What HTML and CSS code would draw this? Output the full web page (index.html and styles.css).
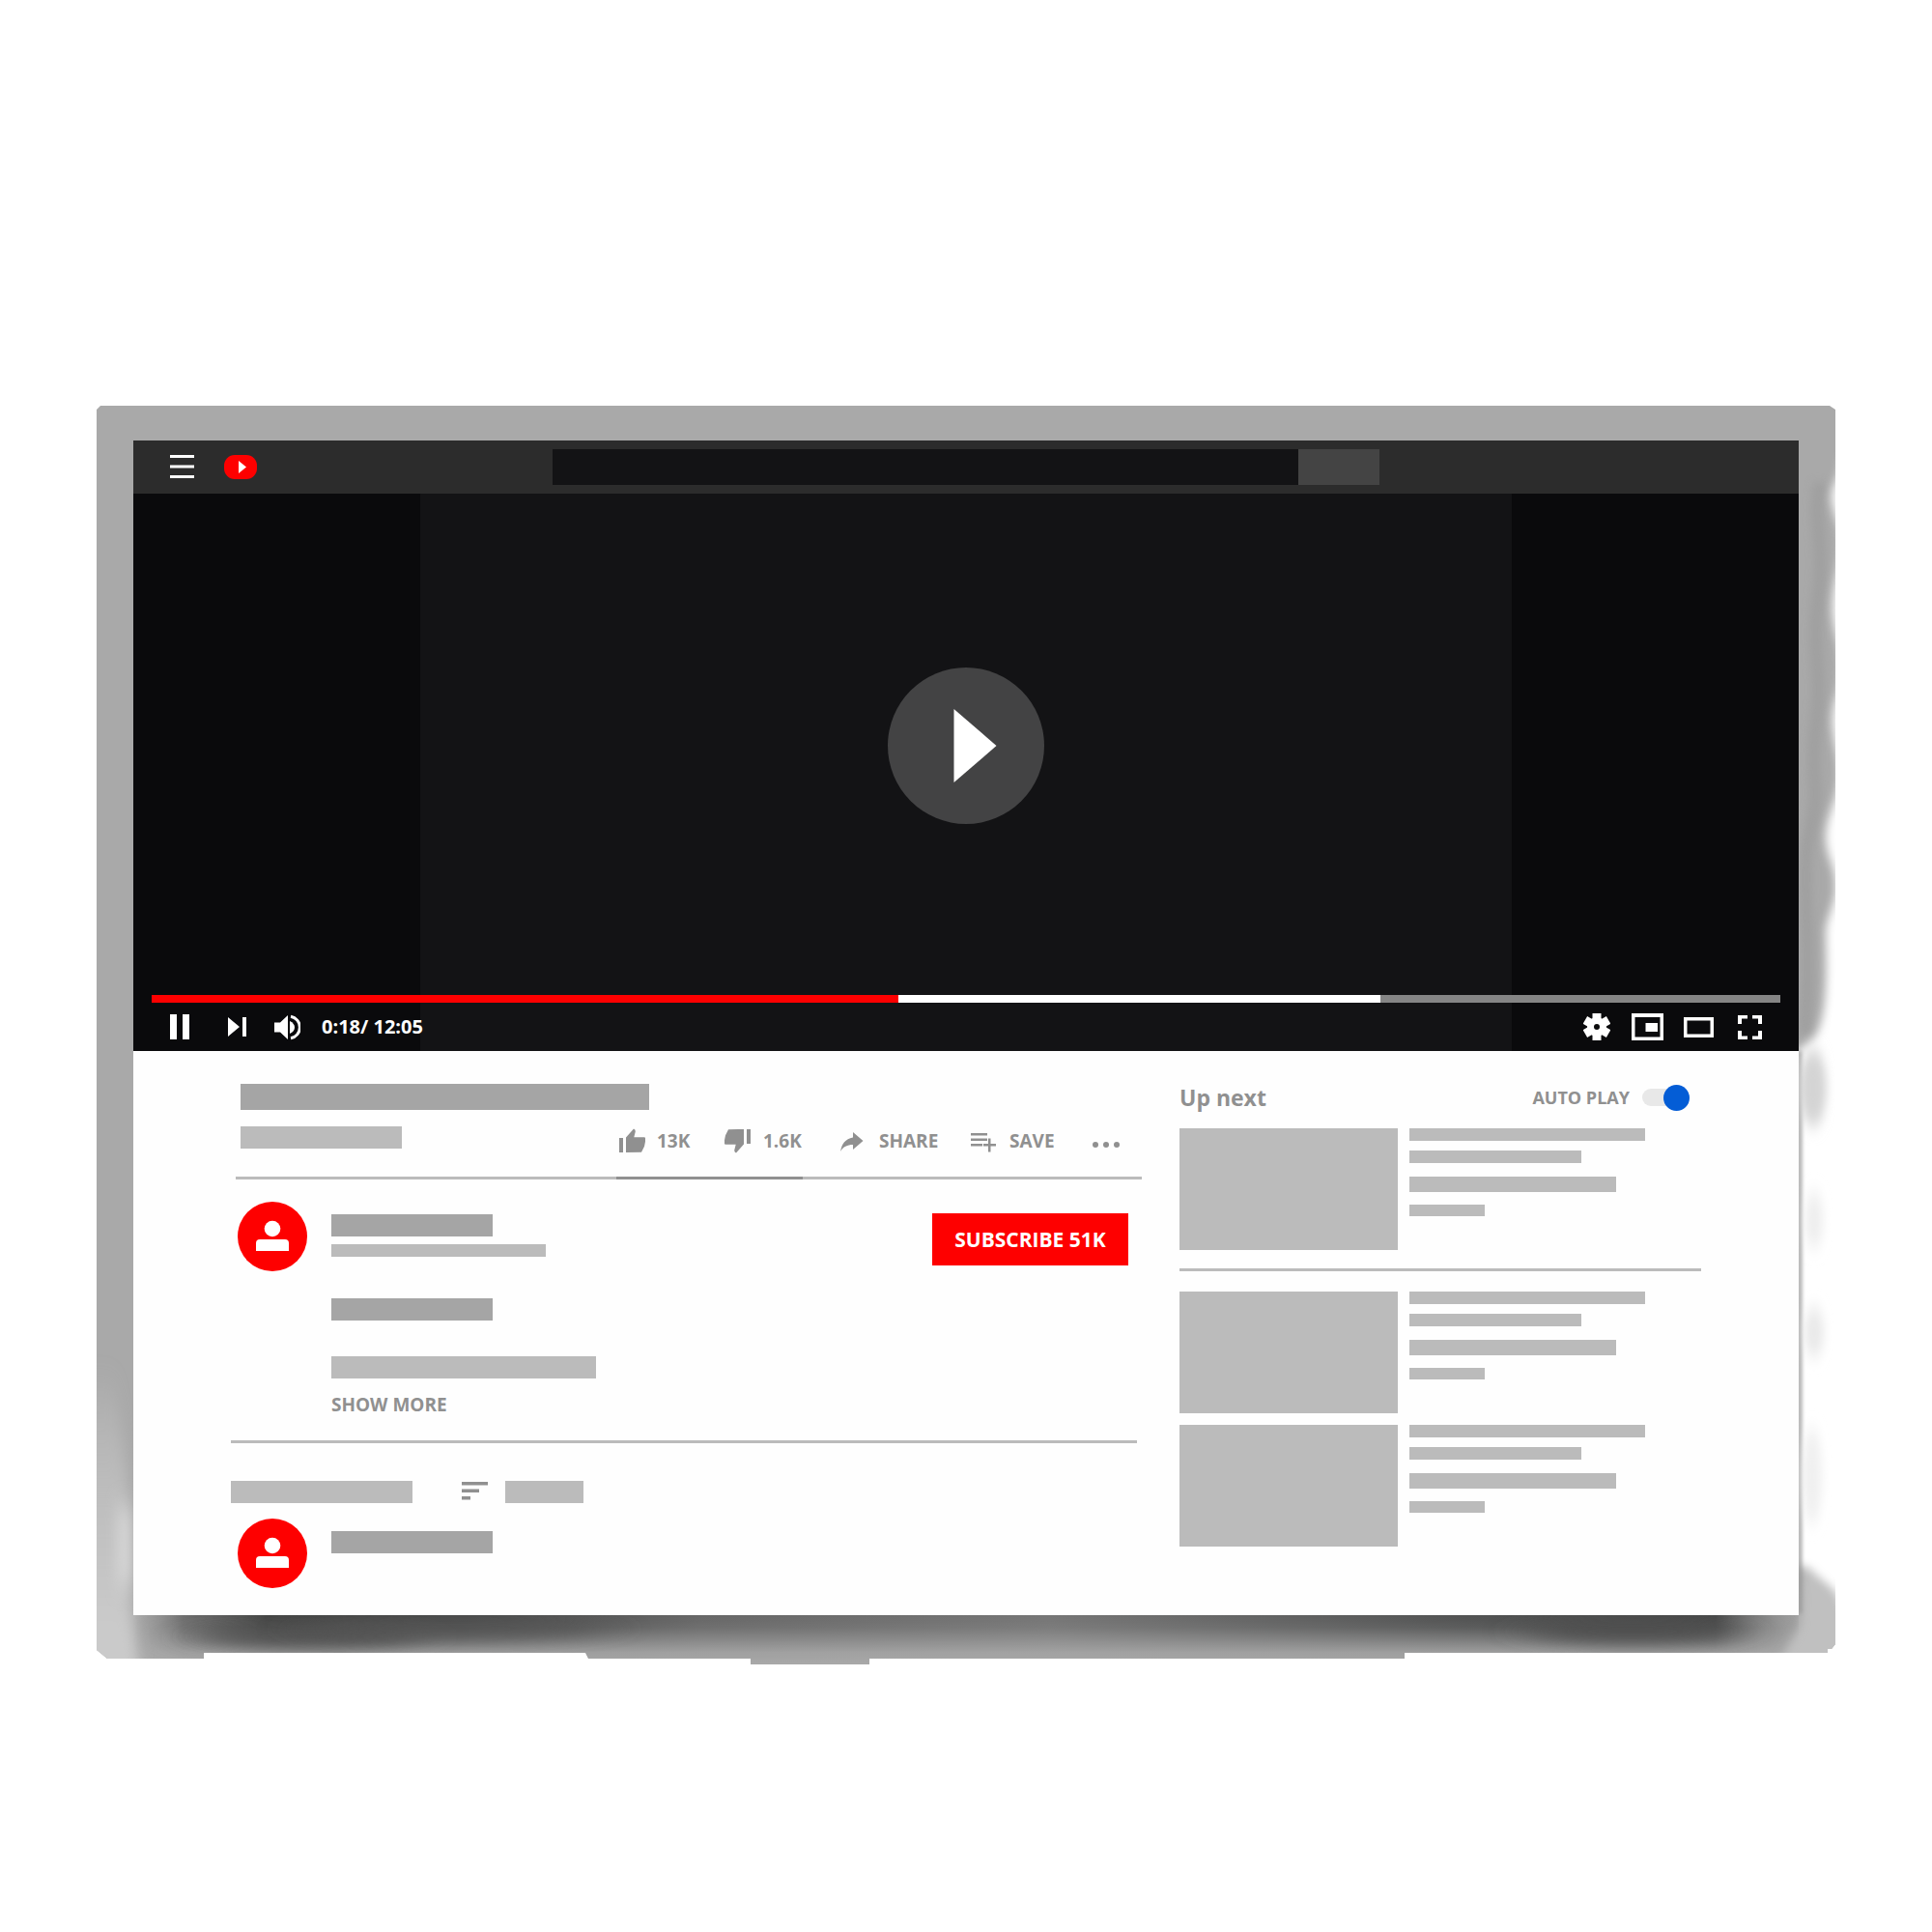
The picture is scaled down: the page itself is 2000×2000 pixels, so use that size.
FILE: index.html
```html
<!DOCTYPE html>
<html lang="en">
<head>
<meta charset="utf-8">
<meta name="viewport" content="width=device-width, initial-scale=1">
<title>Video player</title>
<link rel="stylesheet" href="styles.css">
</head>
<body>
<svg class="symbols" aria-hidden="true">
  <symbol id="avatar" viewBox="0 0 72 72">
    <circle cx="36" cy="36" r="36" fill="#fe0000"/>
    <circle cx="36" cy="28" r="8.3" fill="#fff"/>
    <path d="M19 51v-8q0-4 4-4h26q4 0 4 4v8z" fill="#fff"/>
  </symbol>
  <symbol id="thumb-up" viewBox="0 0 28 28">
    <path d="M1 11h4v15H1zM8 26V10.500L16 1.500q2.500 1 1.500 4L16.300 10.300H27q1.500 0 1 3v1.500l-1 5-3 6z"/>
  </symbol>
</svg>

<div class="device">
  <svg class="bezel" viewBox="0 0 1800 1303" preserveAspectRatio="none" aria-hidden="true">
    <defs>
      <clipPath id="outline"><path d="M0 4 4 0H1794L1800 4V1282L1796 1287 1792 1287V1291H1354V1297H800V1303H677V1297H509L506 1291H111V1297H11L0 1288z"/></clipPath>
      <linearGradient id="shade-x">
        <stop offset="0" stop-color="#777" stop-opacity="0"/>
        <stop offset=".03" stop-color="#555" stop-opacity=".7"/>
        <stop offset=".08" stop-color="#434443"/>
        <stop offset=".2" stop-color="#454646"/>
        <stop offset=".34" stop-color="#666"/>
        <stop offset=".55" stop-color="#757575"/>
        <stop offset=".8" stop-color="#505151"/>
        <stop offset=".95" stop-color="#464747"/>
        <stop offset="1" stop-color="#888" stop-opacity=".3"/>
      </linearGradient>
      <linearGradient id="fade-y" x2="0" y2="1">
        <stop offset="0" stop-color="#fff"/>
        <stop offset=".25" stop-color="#ddd"/>
        <stop offset=".75" stop-color="#222"/>
        <stop offset="1" stop-color="#000"/>
      </linearGradient>
      <linearGradient id="pale" gradientUnits="userSpaceOnUse" x1="0" y1="1000" x2="0" y2="1260">
        <stop offset="0" stop-color="#c9c9c9" stop-opacity="0"/>
        <stop offset=".5" stop-color="#c0c0c0" stop-opacity=".9"/>
        <stop offset="1" stop-color="#cacaca"/>
      </linearGradient>
      <mask id="fade"><rect x="38" y="1252" width="1724" height="51" fill="url(#fade-y)"/></mask>
      <filter id="soft-edge" filterUnits="userSpaceOnUse" x="1700" y="0" width="160" height="1340"><feGaussianBlur stdDeviation="5"/></filter>
      <filter id="soft-spot" filterUnits="userSpaceOnUse" x="1700" y="600" width="160" height="700"><feGaussianBlur stdDeviation="5 9"/></filter>
      <filter id="soft-left" filterUnits="userSpaceOnUse" x="-60" y="950" width="220" height="400"><feGaussianBlur stdDeviation="7 12"/></filter>
      <filter id="soft-l" x="-80%" y="-100%" width="260%" height="300%"><feGaussianBlur stdDeviation="24 8"/></filter>
      <filter id="soft-line" filterUnits="userSpaceOnUse" x="1740" y="640" width="60" height="640"><feGaussianBlur stdDeviation="2"/></filter>
    </defs>
    <g clip-path="url(#outline)">
      <rect width="1800" height="1303" fill="#a9a9a9"/>
      <path d="M-30 1000H18L32 1110 36 1250 48 1330H-30z" fill="url(#pale)" filter="url(#soft-left)"/>
      <path d="M29 1140V1220" stroke="#dcdcdc" stroke-width="12" filter="url(#soft-left)"/>
      <rect x="38" y="1252" width="1724" height="51" fill="url(#shade-x)" mask="url(#fade)"/>
      <ellipse cx="220" cy="1274" rx="120" ry="13" fill="#4b4c4b" filter="url(#soft-l)" opacity=".75"/>
      <ellipse cx="370" cy="1266" rx="160" ry="12" fill="#555" filter="url(#soft-l)" opacity=".7"/>
      <ellipse cx="1590" cy="1269" rx="110" ry="13" fill="#4b4c4b" filter="url(#soft-l)" opacity=".8"/>
      <path d="M1766 1200H1820V1320H1730L1764 1262z" fill="#c0c0c0" filter="url(#soft-edge)"/>
      <path d="M1784 80C1776 120 1789 140 1782 200S1787 270 1780 330 1786 390 1774 440 1778 550 1768 650" fill="none" stroke="#989898" stroke-width="12" opacity=".6" filter="url(#soft-edge)"/>
      <path d="M1840 50 1806 55C1806 75 1796 80 1796 95S1806 122 1806 142 1797 185 1797 209 1806 245 1806 270 1797 305 1797 326 1804 360 1804 382 1790 425 1790 446 1800 475 1800 497 1790 528 1790 548 1794 640 1776 656L1756 672V1200L1774 1204C1786 1218 1806 1225 1806 1244H1840z" fill="#fff" filter="url(#soft-edge)"/>
      <path d="M1763 668V1250" stroke="#999" stroke-width="4" filter="url(#soft-line)"/>
      <g filter="url(#soft-spot)">
        <ellipse cx="1777" cy="706" rx="14" ry="40" fill="#d4d4d4"/>
        <ellipse cx="1778" cy="843" rx="9" ry="30" fill="#eee"/>
        <ellipse cx="1778" cy="959" rx="10" ry="26" fill="#e9e9e9"/>
        <ellipse cx="1776" cy="1108" rx="10" ry="50" fill="#f0f0f0"/>
      </g>
    </g>
  </svg>

  <div class="screen">
    <header class="topbar">
      <div class="brand">
        <button class="icon-button" type="button" aria-label="Menu">
          <svg width="25" height="25" viewBox="0 0 25 25"><path d="M0 0h25v3H0zM0 10.500h25v3H0zM0 21h25v3H0z"/></svg>
        </button>
        <a class="logo" href="#" aria-label="Home">
          <svg width="34" height="25" viewBox="0 0 34 25"><rect width="34" height="25" rx="11" fill="#fe0000"/><path d="M15 6v13l8-6.500z"/></svg>
        </a>
      </div>
      <form class="search">
        <input class="search-input" type="text" aria-label="Search">
        <button class="search-button" type="button" aria-label="Search"></button>
      </form>
    </header>

    <section class="player" aria-label="Player">
      <div class="stage">
        <button class="play" type="button" aria-label="Play">
          <svg width="162" height="162" viewBox="0 0 162 162"><circle cx="81" cy="81" r="81" fill="#434344"/><path d="M68.500 43v76L112.500 81z"/></svg>
        </button>
      </div>
      <input class="seek" type="range" min="0" max="725" value="18" aria-label="Seek" style="--played: 45.850%; --loaded: 75.450%">
      <div class="controls">
        <button class="icon-button pause" type="button" aria-label="Pause">
          <svg width="20" height="26" viewBox="0 0 20 26"><path d="M0 0h7v26H0zM13 0h7v26h-7z"/></svg>
        </button>
        <button class="icon-button next" type="button" aria-label="Next">
          <svg width="20" height="20" viewBox="0 0 20 20"><path d="M0 0v20l12-10zM15 0h4v20h-4z"/></svg>
        </button>
        <button class="icon-button volume" type="button" aria-label="Volume">
          <svg width="27" height="27" viewBox="0 0 27 27"><path d="M0 8.500h6L14 1v25l-8-7.500H0z"/><path d="M16 7q5 2.500 5 6.500t-5 6.500z"/><path d="M17 2.200a11.500 11.500 0 0 1 0 22.600" fill="none" stroke="#fff" stroke-width="3"/></svg>
        </button>
        <span class="time">0:18/ 12:05</span>
        <div class="tools">
          <button class="icon-button" type="button" aria-label="Settings">
            <svg width="28" height="28" viewBox="-14 -14 28 28">
              <circle r="10"/>
              <path d="M-4.500-14h9v28h-9z" id="tooth"/><use href="#tooth" transform="rotate(60)"/><use href="#tooth" transform="rotate(120)"/>
              <circle r="3" fill="#0b0b0c"/>
            </svg>
          </button>
          <button class="icon-button" type="button" aria-label="Miniplayer">
            <svg width="33" height="28" viewBox="0 0 33 28"><path fill-rule="evenodd" d="M0 0h33v28H0zM3.500 4v20.500h26V4z"/><path d="M14.500 10H27v9H14.500z"/></svg>
          </button>
          <button class="icon-button" type="button" aria-label="Theater mode">
            <svg width="31" height="21" viewBox="0 0 31 21"><path fill-rule="evenodd" d="M0 0h31v21H0zM3.500 3.500v14h24v-14z"/></svg>
          </button>
          <button class="icon-button" type="button" aria-label="Full screen">
            <svg width="25" height="25" viewBox="0 0 25 25"><path d="M0 9V0h10v3.500H4V9zM15 0h10v9h-4V3.500h-6zM0 16h4v5.500h6V25H0zM21 16h4v9H15v-3.500h6z"/></svg>
          </button>
        </div>
      </div>
    </section>

    <main class="content">
      <div class="primary">
        <section class="summary">
          <div class="bar bar-title"></div>
          <div class="meta">
            <div class="bar bar-name light"></div>
            <div class="actions">
              <button class="action like" type="button"><svg width="28" height="28"><use href="#thumb-up"/></svg>13K</button>
              <button class="action dislike" type="button"><svg class="flipped" width="28" height="28"><use href="#thumb-up"/></svg>1.6K</button>
              <button class="action share" type="button"><svg width="28" height="28" viewBox="0 0 28 28"><path d="M13 5v5.500C5 12 1.500 17 0 25c3-5 7-7 13-7v5l10.500-9z"/></svg>SHARE</button>
              <button class="action save" type="button"><svg width="28" height="28" viewBox="0 0 28 28"><path d="M0 6h17v2.500H0zM0 11.500h17V14H0zM0 17h12v2.500H0zM18 11.500h2.500V17H26v2.500h-5.500v6H18v-6h-5V17h5z"/></svg>SAVE</button>
              <button class="action more" type="button" aria-label="More"><svg width="28" height="28" viewBox="0 0 28 28"><circle cx="3" cy="18" r="3"/><circle cx="14" cy="18" r="3"/><circle cx="25" cy="18" r="3"/></svg></button>
            </div>
          </div>
          <div class="rating"><div class="rating-value"></div></div>
        </section>

        <section class="channel">
          <svg class="avatar" width="72" height="72"><use href="#avatar"/></svg>
          <div class="details">
            <div class="bar bar-name"></div>
            <div class="bar bar-subs"></div>
            <div class="bar bar-name bar-intro"></div>
            <div class="bar bar-text"></div>
            <button class="show-more" type="button">SHOW MORE</button>
          </div>
          <button class="subscribe" type="button">SUBSCRIBE 51K</button>
        </section>
        <hr class="rule rule-primary">

        <section class="comments">
          <div class="comments-head">
            <div class="bar bar-count"></div>
            <svg class="sort" width="27" height="19" viewBox="0 0 27 19"><path d="M0 0h27v3.500H0zM0 7.500h18V11H0zM0 15h9v3.500H0z"/></svg>
            <div class="bar bar-sort"></div>
          </div>
          <div class="comment">
            <svg class="avatar" width="72" height="72"><use href="#avatar"/></svg>
            <div class="details"><div class="bar bar-name"></div></div>
          </div>
        </section>
      </div>

      <aside class="secondary">
        <div class="next-head">
          <h2 class="next-title">Up next</h2>
          <label class="autoplay">AUTO PLAY <input class="switch" type="checkbox" role="switch" checked></label>
        </div>
        <div class="card"><div class="thumbnail"></div><div class="lines"><i class="line l1"></i><i class="line l2"></i><i class="line l3"></i><i class="line l4"></i></div></div>
        <hr class="rule rule-secondary">
        <div class="list">
          <div class="card"><div class="thumbnail"></div><div class="lines"><i class="line l1"></i><i class="line l2"></i><i class="line l3"></i><i class="line l4"></i></div></div>
          <div class="card"><div class="thumbnail"></div><div class="lines"><i class="line l1"></i><i class="line l2"></i><i class="line l3"></i><i class="line l4"></i></div></div>
        </div>
      </aside>
    </main>
  </div>
</div>
</body>
</html>
```
FILE: styles.css
```css
:root {
  --red: #fe0000;
  --ink: #909090;
  --mid: #a5a5a5;
  --light: #bbb;
}

* { box-sizing: border-box; }

body {
  margin: 0;
  padding: 21vw 5vw 5vw;
  background: #fff;
  color: var(--ink);
  font: 700 19px/24px "Open Sans", "Noto Sans", sans-serif;
}

button {
  padding: 0;
  border: 0;
  background: none;
  color: inherit;
  font: inherit;
  cursor: pointer;
}

svg { display: block; }

.symbols { display: none; }

/* Device */
.device {
  position: relative;
  padding: 36px 38px 51px;
}

.bezel {
  position: absolute;
  inset: 0;
  width: 100%;
  height: 100%;
}

.screen {
  position: relative;
  background: #fefefe;
}

/* Top bar */
.topbar {
  display: grid;
  grid-template-columns: 1fr minmax(0, 856px) 1fr;
  align-items: center;
  height: 55px;
  background: #2c2c2c;
}

.brand {
  display: flex;
  align-items: center;
  gap: 31px;
  padding-left: 38px;
  fill: #fff;
}

.search {
  display: flex;
  height: 37px;
}

.search-input {
  flex: 1;
  min-width: 0;
  padding: 0 16px;
  border: 0;
  background: #131315;
  color: #fff;
  font: inherit;
}

.search-button {
  width: 84px;
  background: #444;
}

/* Player */
.player {
  background: linear-gradient(90deg, #0a0a0c 17.25%, #131315 17.25% 82.75%, #0a0a0c 82.75%);
  color: #fff;
  fill: #fff;
}

.stage {
  display: grid;
  place-items: center;
  height: 519px;
  padding-top: 3px;
}

.play { border-radius: 50%; }

.seek {
  display: block;
  width: auto;
  min-width: calc(100% - 38px);
  height: 8px;
  margin: 0 19px;
  appearance: none;
  background: linear-gradient(90deg, var(--red) var(--played), #fff var(--played) var(--loaded), #858585 var(--loaded));
}

.seek::-webkit-slider-thumb {
  width: 0;
  height: 0;
  appearance: none;
}

.controls {
  display: flex;
  align-items: center;
  height: 50px;
  padding: 0 24px 0 38px;
}

.next { margin-left: 40px; }
.volume { margin-left: 28px; }

.time {
  margin-left: 22px;
  font-size: 20px;
}

.tools {
  display: flex;
  margin-left: auto;
}

.tools .icon-button {
  display: grid;
  place-items: center;
  width: 53px;
}

/* Content */
.content {
  display: grid;
  grid-template-columns: minmax(0, 1fr) 540px;
  gap: 39px;
  padding: 34px 101px 28px;
}

.bar {
  height: 23px;
  background: var(--light);
}

.bar-title {
  width: 423px;
  height: 27px;
  margin-left: 5px;
  background: var(--mid);
}

.bar-name {
  width: 167px;
  background: var(--mid);
}

.bar-name.light { background: var(--light); }

.summary { padding-left: 5px; }

.meta {
  display: flex;
  justify-content: space-between;
  height: 30px;
  margin: 17px 0 22px;
  padding-left: 5px;
}

.actions {
  display: flex;
  padding-right: 23px;
}

.action {
  display: flex;
  align-items: center;
  gap: 12px;
  fill: var(--ink);
}

.like { width: 110px; }
.dislike { width: 120px; }
.share { width: 135px; }
.save { width: 126px; }

.flipped { transform: rotate(180deg); }

.rating {
  height: 3px;
  padding-left: 42%;
  background: var(--light);
}

.rating-value {
  width: 193px;
  height: 3px;
  background: var(--ink);
}

.channel {
  display: flex;
  align-items: flex-start;
  padding: 23px 14px 25px 7px;
}

.avatar { flex: none; }

.details {
  flex: 1;
  padding: 13px 0 0 25px;
}

.bar-subs {
  width: 222px;
  height: 13px;
  margin-top: 8px;
}

.bar-intro { margin-top: 43px; }

.bar-text {
  width: 274px;
  margin: 37px 0 15px;
}

.show-more { display: block; }

.subscribe {
  width: 203px;
  height: 54px;
  margin-top: 12px;
  background: var(--red);
  color: #fff;
  font-size: 21px;
}

.rule {
  height: 3px;
  border: 0;
  background: var(--light);
}

.rule-primary { margin: 0 5px 39px 0; }

.comments-head { display: flex; }

.bar-count { width: 188px; }

.sort {
  margin: 1px 18px 0 51px;
  fill: var(--ink);
}

.bar-sort { width: 81px; }

.comment {
  display: flex;
  padding: 16px 0 0 7px;
}

/* Up next */
.next-head {
  display: flex;
  align-items: center;
  justify-content: space-between;
  height: 28px;
  margin-bottom: 18px;
  padding-right: 12px;
}

.next-title {
  margin: 0;
  font-size: 23px;
}

.autoplay {
  display: flex;
  align-items: center;
  gap: 13px;
  font-size: 18px;
}

.switch {
  display: grid;
  align-items: center;
  width: 49px;
  height: 27px;
  margin: 0;
  appearance: none;
}

.switch::before,
.switch::after {
  grid-area: 1 / 1;
  content: "";
}

.switch::before {
  width: 44px;
  height: 18px;
  border-radius: 9px;
  background: #e8e8e8;
}

.switch::after {
  justify-self: end;
  width: 27px;
  height: 27px;
  border-radius: 50%;
  background: #045dd6;
}

.card {
  display: flex;
  gap: 12px;
}

.thumbnail {
  width: 226px;
  height: 126px;
  background: var(--light);
}

.line {
  display: block;
  height: 13px;
  background: var(--light);
}

.l1 { width: 244px; }

.l2 {
  width: 178px;
  margin-top: 10px;
}

.l3 {
  width: 214px;
  height: 16px;
  margin: 14px 0 13px;
}

.l4 {
  width: 78px;
  height: 12px;
}

.rule-secondary { margin: 19px 0 21px; }

.list {
  display: grid;
  gap: 12px;
}
```
